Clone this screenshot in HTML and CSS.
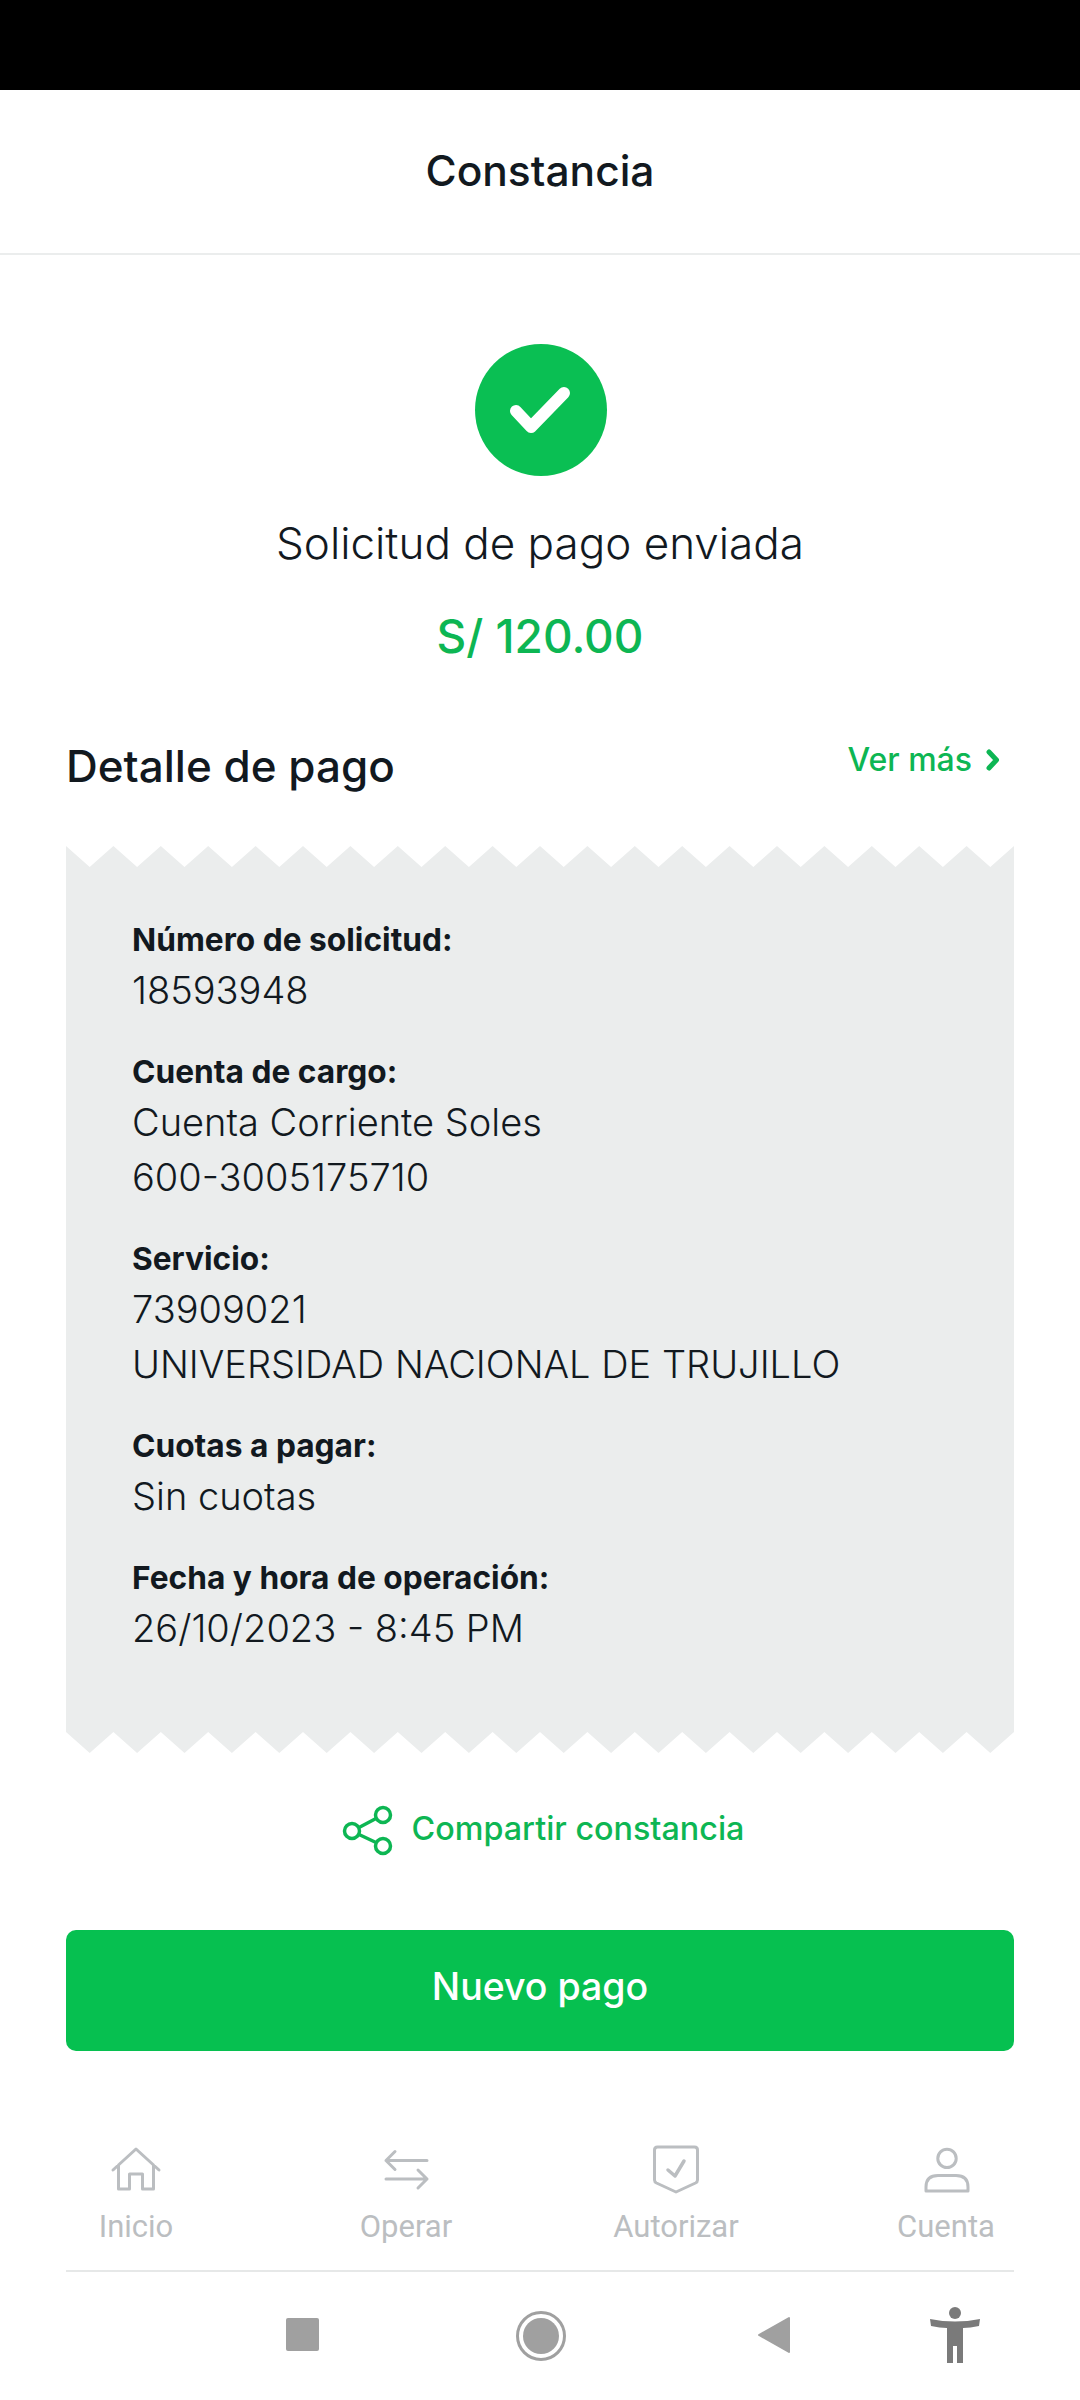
FILE: index.html
```html
<!DOCTYPE html>
<html lang="es">
<head>
    <meta charset="UTF-8">
    <meta name="viewport" content="width=device-width, initial-scale=1.0">
    <title>Constancia</title>
    <link rel="stylesheet" href="styles.css">
</head>
<body>
    <div class="status-bar"></div>
    <header class="top-bar">
        <h1>Constancia</h1>
    </header>
    <main class="content">
        <section class="result">
            <svg class="result-icon" viewBox="0 0 132 132">
                <circle cx="66" cy="66" r="66" fill="#0abf53"/>
                <path d="M41 67 L56 83 L89 49" fill="none" stroke="#fff" stroke-width="12" stroke-linecap="round" stroke-linejoin="round"/>
            </svg>
            <p class="result-title">Solicitud de pago enviada</p>
            <p class="result-amount">S/ 120.00</p>
        </section>
        <div class="detail-head">
            <h2>Detalle de pago</h2>
            <a class="more-link">Ver más
                <svg class="more-icon" viewBox="0 0 14 22">
                    <path d="M3 3 L10.5 11 L3 19" fill="none" stroke="#0db653" stroke-width="5" stroke-linecap="round" stroke-linejoin="round"/>
                </svg>
            </a>
        </div>
        <section class="ticket">
            <svg class="ticket-edge" viewBox="0 0 948 21">
                <path fill="#ebeded" d="M0 0 L23.7 21 L47.4 0 L71.1 21 L94.8 0 L118.5 21 L142.2 0 L165.9 21 L189.6 0 L213.3 21 L237 0 L260.7 21 L284.4 0 L308.1 21 L331.8 0 L355.5 21 L379.2 0 L402.9 21 L426.6 0 L450.3 21 L474 0 L497.7 21 L521.4 0 L545.1 21 L568.8 0 L592.5 21 L616.2 0 L639.9 21 L663.6 0 L687.3 21 L711 0 L734.7 21 L758.4 0 L782.1 21 L805.8 0 L829.5 21 L853.2 0 L876.9 21 L900.6 0 L924.3 21 L948 0 L948 21 L0 21 Z"/>
            </svg>
            <div class="ticket-body">
                <div class="field">
                    <p class="field-label">Número de solicitud:</p>
                    <p class="field-value">18593948</p>
                </div>
                <div class="field">
                    <p class="field-label">Cuenta de cargo:</p>
                    <p class="field-value">Cuenta Corriente Soles</p>
                    <p class="field-value">600-3005175710</p>
                </div>
                <div class="field">
                    <p class="field-label">Servicio:</p>
                    <p class="field-value">73909021</p>
                    <p class="field-value">UNIVERSIDAD NACIONAL DE TRUJILLO</p>
                </div>
                <div class="field">
                    <p class="field-label">Cuotas a pagar:</p>
                    <p class="field-value">Sin cuotas</p>
                </div>
                <div class="field">
                    <p class="field-label">Fecha y hora de operación:</p>
                    <p class="field-value">26/10/2023 - 8:45 PM</p>
                </div>
            </div>
            <svg class="ticket-edge" viewBox="0 0 948 21">
                <path fill="#ebeded" d="M0 0 L23.7 21 L47.4 0 L71.1 21 L94.8 0 L118.5 21 L142.2 0 L165.9 21 L189.6 0 L213.3 21 L237 0 L260.7 21 L284.4 0 L308.1 21 L331.8 0 L355.5 21 L379.2 0 L402.9 21 L426.6 0 L450.3 21 L474 0 L497.7 21 L521.4 0 L545.1 21 L568.8 0 L592.5 21 L616.2 0 L639.9 21 L663.6 0 L687.3 21 L711 0 L734.7 21 L758.4 0 L782.1 21 L805.8 0 L829.5 21 L853.2 0 L876.9 21 L900.6 0 L924.3 21 L948 0 Z"/>
            </svg>
        </section>
        <a class="share-link">
            <svg class="share-icon" viewBox="0 0 52 52">
                <g fill="none" stroke="#0db653" stroke-width="3.5">
                    <circle cx="10" cy="26" r="7.5"/>
                    <circle cx="41" cy="10" r="7.5"/>
                    <circle cx="41" cy="41" r="7.5"/>
                    <path d="M17 22.5 L34 13.5 M17 29.5 L34 37.5"/>
                </g>
            </svg>
            <span class="share-text">Compartir constancia</span>
        </a>
        <button class="primary-btn">Nuevo pago</button>
    </main>
    <nav class="tab-bar">
        <div class="tab">
            <svg class="tab-icon" viewBox="0 0 52 52">
                <path d="M3 26 L26 5 L49 26 M8.5 21 V45 H19.5 V30 H32.5 V45 H43.5 V21" fill="none" stroke="#bbbec1" stroke-width="3" stroke-linecap="round" stroke-linejoin="round"/>
            </svg>
            <span>Inicio</span>
        </div>
        <div class="tab">
            <svg class="tab-icon" viewBox="0 0 52 52">
                <path d="M6 16.5 H47 M15 7.5 L6 16.5 L15 25.5 M6 35 H47 M38 26 L47 35 L38 44" fill="none" stroke="#bbbec1" stroke-width="3" stroke-linecap="round" stroke-linejoin="round"/>
            </svg>
            <span>Operar</span>
        </div>
        <div class="tab">
            <svg class="tab-icon" viewBox="0 0 52 52">
                <path d="M4.5 6 Q4.5 3 7.5 3 H44.5 Q47.5 3 47.5 6 V36 Q47.5 38 45.5 39 L26 48 L6.5 39 Q4.5 38 4.5 36 Z" fill="none" stroke="#bbbec1" stroke-width="3" stroke-linejoin="round"/>
                <path d="M18 26 L25 32 L34 17" fill="none" stroke="#bbbec1" stroke-width="3.5" stroke-linecap="round" stroke-linejoin="round"/>
            </svg>
            <span>Autorizar</span>
        </div>
        <div class="tab">
            <svg class="tab-icon" viewBox="0 0 52 52">
                <circle cx="27" cy="14.4" r="9.2" fill="none" stroke="#bbbec1" stroke-width="3"/>
                <path d="M6 47 V43 Q6 31.5 18 31.5 H36 Q48 31.5 48 43 V47 Z" fill="none" stroke="#bbbec1" stroke-width="3" stroke-linejoin="round"/>
            </svg>
            <span>Cuenta</span>
        </div>
    </nav>
    <div class="tab-rule"></div>
    <footer class="nav-bar">
        <svg class="nav-square" viewBox="0 0 33 33"><rect width="33" height="33" rx="2" fill="#a0a0a0"/></svg>
        <svg class="nav-home" viewBox="0 0 50 50">
            <circle cx="25" cy="25" r="23.5" fill="none" stroke="#a0a0a0" stroke-width="3"/>
            <circle cx="25" cy="25" r="18" fill="#a0a0a0"/>
        </svg>
        <svg class="nav-back" viewBox="0 0 34 38"><path d="M32 2 V36 L2 19 Z" fill="#a0a0a0" stroke="#a0a0a0" stroke-width="2" stroke-linejoin="round"/></svg>
        <svg class="nav-access" viewBox="0 0 50 56">
            <circle cx="25" cy="6" r="6" fill="#7a7a7a"/>
            <path d="M0 12 Q25 17 50 12 L49 19 Q40 21 33 21 V56 H27 V39 H23 V56 H17 V21 Q10 21 1 19 Z" fill="#7a7a7a"/>
        </svg>
    </footer>
</body>
</html>
```

FILE: styles.css
```css
* {
    box-sizing: border-box;
}
html, body {
    margin: 0;
    padding: 0;
}
body {
    width: 1080px;
    height: 2400px;
    background: #fff;
    color: #12191f;
    font-family: Inter, Lato, sans-serif;
    overflow: hidden;
}
p, h1, h2 {
    margin: 0;
    font-weight: 400;
}
.status-bar {
    height: 90px;
    background: #000;
}
.top-bar {
    height: 165px;
    display: flex;
    align-items: center;
    justify-content: center;
    padding-bottom: 3px;
    border-bottom: 2px solid #ebeded;
}
.top-bar h1 {
    font-size: 42.5px;
    font-weight: 500;
}
.content {
    padding: 89px 66px 0;
}
.result {
    display: flex;
    flex-direction: column;
    align-items: center;
}
.result-icon {
    width: 132px;
    height: 132px;
    margin-left: 2px;
}
.result-title {
    margin-top: 40px;
    font-size: 44px;
    line-height: 54px;
    font-weight: 300;
}
.result-amount {
    margin-top: 38px;
    font-size: 46px;
    line-height: 56px;
    font-weight: 500;
    color: #0db653;
}
.detail-head {
    margin-top: 76px;
    display: flex;
    justify-content: space-between;
    align-items: flex-start;
    height: 106px;
}
.detail-head h2 {
    font-size: 44px;
    line-height: 52px;
    font-weight: 500;
}
.more-link {
    display: flex;
    align-items: center;
    gap: 14px;
    padding-right: 14px;
    font-size: 32px;
    line-height: 40px;
    font-weight: 500;
    color: #0db653;
}
.more-icon {
    width: 14px;
    height: 22px;
}
.ticket-edge {
    display: block;
    width: 948px;
    height: 21px;
}
.ticket-body {
    background: #ebeded;
    padding: 49px 66px 0;
    height: 865px;
}
.field {
    margin-bottom: 30px;
}
.field-label {
    font-size: 31.7px;
    line-height: 47px;
    font-weight: 700;
}
.field-value {
    font-size: 38px;
    line-height: 55px;
    font-weight: 300;
}
.share-link {
    margin-top: 52px;
    padding-left: 6px;
    display: flex;
    align-items: center;
    justify-content: center;
    gap: 18px;
    font-size: 32.3px;
    font-weight: 500;
    color: #0db653;
}
.share-text {
    margin-bottom: 6px;
}
.share-icon {
    width: 52px;
    height: 52px;
}
.primary-btn {
    display: block;
    width: 100%;
    height: 121px;
    margin-top: 73px;
    padding-bottom: 9px;
    border: none;
    border-radius: 10px;
    background: #06c050;
    color: #fff;
    font-family: inherit;
    font-size: 37.5px;
    font-weight: 500;
}
.tab-bar {
    margin: 93px 0 0 1px;
    height: 126px;
    display: grid;
    grid-template-columns: repeat(4, 270px);
}
.tab {
    display: flex;
    flex-direction: column;
    align-items: center;
    color: #bbbec1;
    font-family: Roboto, sans-serif;
    font-size: 31px;
    line-height: 36px;
}
.tab-icon {
    width: 52px;
    height: 52px;
    margin-bottom: 13px;
}
.tab-rule {
    height: 2px;
    margin: 0 66px;
    background: #e6e8e8;
}
.nav-bar {
    position: relative;
    height: 128px;
}
.nav-bar svg {
    position: absolute;
}
.nav-square {
    left: 286px;
    top: 46px;
    width: 33px;
    height: 33px;
}
.nav-home {
    left: 516px;
    top: 39px;
    width: 50px;
    height: 50px;
}
.nav-back {
    left: 757px;
    top: 44px;
    width: 34px;
    height: 38px;
}
.nav-access {
    left: 930px;
    top: 35px;
    width: 50px;
    height: 56px;
}
```
